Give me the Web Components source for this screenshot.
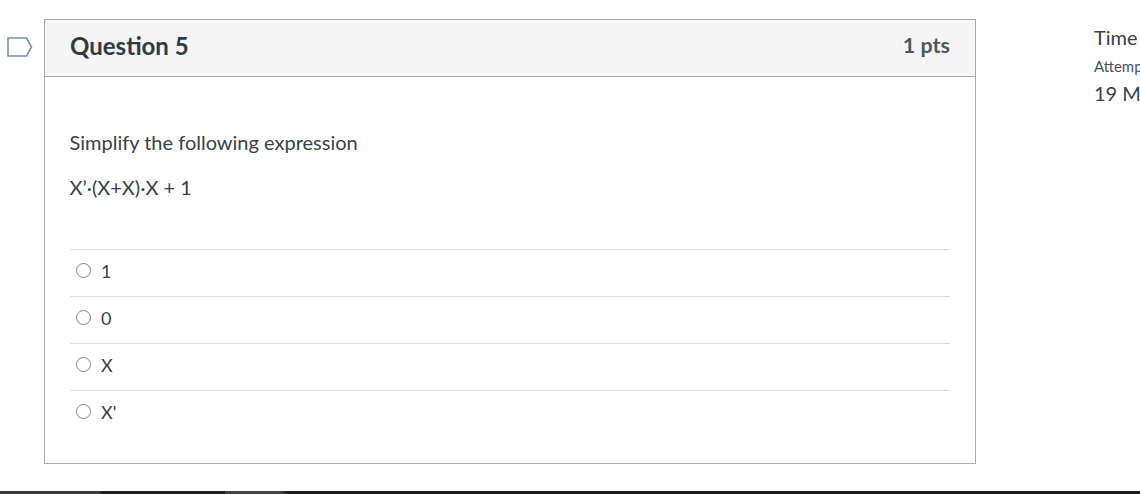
<!DOCTYPE html>
<html>
<head>
<meta charset="utf-8">
<title>Question 5</title>
<style>
  html, body { margin: 0; height: 100%; overflow: hidden; background: #fff; }
  body { font-family: Lato, "Open Sans", sans-serif; color: #36424b; }
</style>
</head>
<body>
<quiz-page>
  <quiz-question slot="main" number="5" points="1 pts">
    <p>Simplify the following expression</p>
    <p>X’∙(X+X)∙X + 1</p>
    <quiz-answer slot="answers">1</quiz-answer>
    <quiz-answer slot="answers">0</quiz-answer>
    <quiz-answer slot="answers">X</quiz-answer>
    <quiz-answer slot="answers">X'</quiz-answer>
  </quiz-question>
</quiz-page>
<script>
class QuizPage extends HTMLElement {
  connectedCallback() {
    this.attachShadow({ mode: 'open' });
    this.shadowRoot.innerHTML = `
      <style>
        :host { display: flex; flex-direction: column; height: 494px; width: 1140px; overflow: hidden; }
        .content { flex: 1; display: flex; padding-top: 19px; min-height: 0; }
        .flag { width: 44px; flex: none; box-sizing: border-box; padding: 18px 0 0 7px; }
        .flag svg { display: block; }
        .main { width: 932px; flex: none; }
        .side { margin-left: 118px; padding-top: 4px; white-space: nowrap; color: #36424b; font-size: 20px; }
        .side div { height: 28px; line-height: 28px; }
        .side .small { font-size: 15px; line-height: 30px; color: #45525c; }
        .taskbar { height: 3px; display: flex; background: #1c1c1c; flex: none; }
        .taskbar i { display: block; }
        .a { width: 101px; background: #3a3a3a; }
        .b { width: 124px; background: #1e1e1e; }
        .c { width: 56px; background: #444; }
        .d { width: 5px; background: #333; }
      </style>
      <div class="content">
        <div class="flag">
          <svg width="26" height="20" viewBox="0 0 26 20">
            <path d="M1 1H19.5L24.5 10L19.5 19H1Z" fill="#fff" stroke="#6f93b0" stroke-width="1.6"/>
          </svg>
        </div>
        <div class="main"><slot name="main"></slot></div>
        <div class="side">
          <div>Time</div>
          <div class="small">Attempt</div>
          <div>19 M</div>
        </div>
      </div>
      <div class="taskbar"><i class="a"></i><i class="b"></i><i class="c"></i><i class="d"></i></div>
    `;
  }
}

class QuizQuestion extends HTMLElement {
  connectedCallback() {
    this.attachShadow({ mode: 'open' });
    this.shadowRoot.innerHTML = `
      <style>
        :host { display: block; box-sizing: border-box; height: 445px; border: 1px solid #a9a9a9; background: #fff; }
        header {
          display: flex; justify-content: space-between; align-items: center;
          height: 50px; padding: 0 25px 6px; border-bottom: 1px solid #a9a9a9; background: #f5f5f5;
        }
        h2 { margin: 0; font-size: 24px; font-weight: 700; color: #2d3b45; }
        .pts { font-size: 21.5px; font-weight: 700; color: #4d5961; }
        .text { padding: 50px 25px 0 24.5px; font-size: 20px; line-height: 30px; color: #36424b; }
        ::slotted(p) { margin: 0 0 15px; }
        .answers { margin: 47px 25px 0; }
      </style>
      <header>
        <h2>Question ${this.getAttribute('number')}</h2>
        <div class="pts">${this.getAttribute('points')}</div>
      </header>
      <div class="text"><slot></slot></div>
      <div class="answers"><slot name="answers"></slot></div>
    `;
  }
}

class QuizAnswer extends HTMLElement {
  connectedCallback() {
    this.attachShadow({ mode: 'open' });
    this.shadowRoot.innerHTML = `
      <style>
        :host { display: flex; align-items: center; gap: 10px; box-sizing: border-box; height: 47px; border-top: 1px solid #dcdcdc; padding: 0 0 5px 6px; font-size: 18px; color: #36424b; }
        .radio { width: 15px; height: 15px; box-sizing: border-box; border: 1.5px solid #808080; border-radius: 50%; background: #fff; flex: none; }
      </style>
      <span class="radio"></span><span><slot></slot></span>
    `;
  }
}

customElements.define('quiz-page', QuizPage);
customElements.define('quiz-question', QuizQuestion);
customElements.define('quiz-answer', QuizAnswer);
</script>
</body>
</html>
